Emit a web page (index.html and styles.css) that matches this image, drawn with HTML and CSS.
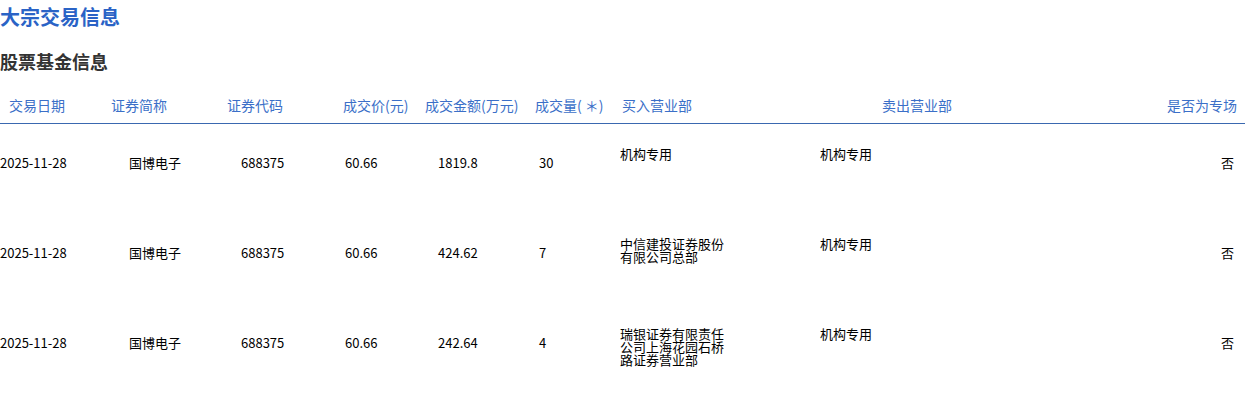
FILE: index.html
```html
<!DOCTYPE html>
<html lang="zh-CN">
<head>
<meta charset="utf-8">
<title>大宗交易信息</title>
<link rel="stylesheet" href="styles.css">
</head>
<body>
<h1 class="title">大宗交易信息</h1>
<h2 class="subtitle">股票基金信息</h2>
<div class="table">
  <div class="row head">
    <div class="c c1">交易日期</div>
    <div class="c c2">证券简称</div>
    <div class="c c3">证券代码</div>
    <div class="c c4">成交价(元)</div>
    <div class="c c5">成交金额(万元)</div>
    <div class="c c6">成交量( ＊)</div>
    <div class="c c7">买入营业部</div>
    <div class="c c8">卖出营业部</div>
    <div class="c c9">是否为专场</div>
  </div>
  <div class="row data">
    <div class="c c1">2025-11-28</div>
    <div class="c c2">国博电子</div>
    <div class="c c3">688375</div>
    <div class="c c4">60.66</div>
    <div class="c c5">1819.8</div>
    <div class="c c6">30</div>
    <div class="c c7 dept">机构专用</div>
    <div class="c c8 dept">机构专用</div>
    <div class="c c9">否</div>
  </div>
  <div class="row data">
    <div class="c c1">2025-11-28</div>
    <div class="c c2">国博电子</div>
    <div class="c c3">688375</div>
    <div class="c c4">60.66</div>
    <div class="c c5">424.62</div>
    <div class="c c6">7</div>
    <div class="c c7 dept">中信建投证券股份有限公司总部</div>
    <div class="c c8 dept">机构专用</div>
    <div class="c c9">否</div>
  </div>
  <div class="row data">
    <div class="c c1">2025-11-28</div>
    <div class="c c2">国博电子</div>
    <div class="c c3">688375</div>
    <div class="c c4">60.66</div>
    <div class="c c5">242.64</div>
    <div class="c c6">4</div>
    <div class="c c7 dept">瑞银证券有限责任公司上海花园石桥路证券营业部</div>
    <div class="c c8 dept">机构专用</div>
    <div class="c c9">否</div>
  </div>
</div>
</body>
</html>
```
FILE: styles.css
```css
html, body {
  margin: 0;
  padding: 0;
  background: #fff;
}
body {
  font-family: "Noto Sans CJK SC", "Noto Sans", sans-serif;
  color: #000;
}
.title {
  margin: 0;
  font-size: 20px;
  line-height: 34px;
  font-weight: bold;
  color: #2a63c6;
}
.subtitle {
  margin: 14px 0 0;
  font-size: 18px;
  line-height: 26px;
  font-weight: bold;
  color: #333;
}
.row {
  display: grid;
  grid-template-columns: 100px 115px 115px 85px 110px 87px 200px 288px 145px;
}
.head {
  padding: 22px 0 9px;
  border-bottom: 1px solid #3a68b0;
  font-size: 14px;
  line-height: 18px;
  color: #3b6fc8;
}
.data {
  height: 90px;
  font-size: 13px;
  line-height: 18px;
}
.data .c {
  padding-top: 30px;
}
.data .dept {
  padding-top: 23px;
  line-height: 13px;
  width: 106px;
  box-sizing: content-box;
}
.c9 { text-align: right; }

.head .c1 { padding-left: 9px; }
.head .c2 { padding-left: 11px; }
.head .c3 { padding-left: 12px; }
.head .c4 { padding-left: 13px; }
.head .c5 { padding-left: 10px; }
.head .c6 { padding-left: 10px; }
.head .c7 { padding-left: 10px; }
.head .c8 { padding-left: 70px; }
.head .c9 { padding-right: 8px; }

.data .c1 { padding-left: 0; }
.data .c2 { padding-left: 29px; }
.data .c3 { padding-left: 26px; }
.data .c4 { padding-left: 15px; }
.data .c5 { padding-left: 23px; }
.data .c6 { padding-left: 14px; }
.data .c7 { padding-left: 8px; }
.data .c8 { padding-left: 8px; }
.data .c9 { padding-right: 11px; }
```
